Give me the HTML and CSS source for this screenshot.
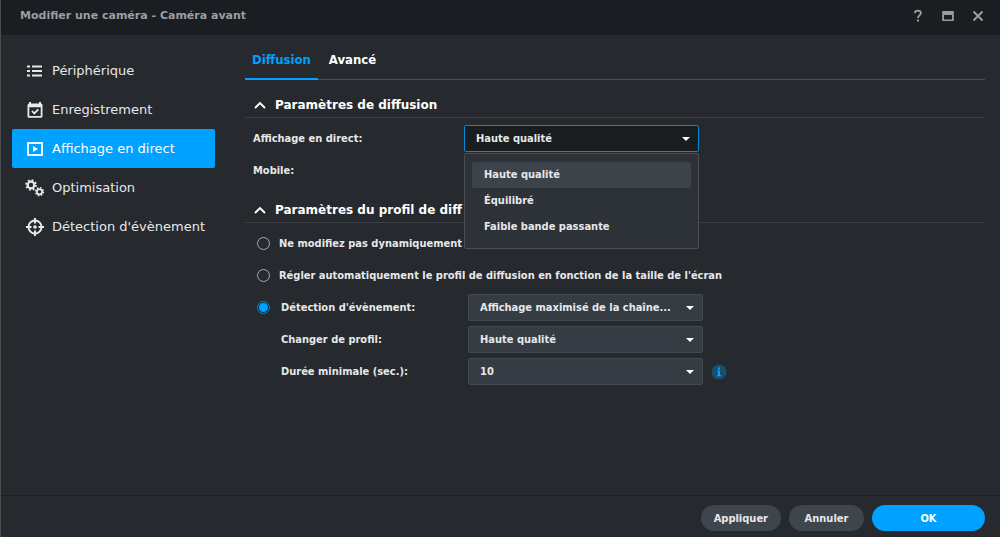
FILE: index.html
```html
<!DOCTYPE html>
<html lang="fr">
<head>
<meta charset="utf-8">
<meta name="viewport" content="width=device-width, initial-scale=1">
<title>Modifier une caméra - Caméra avant</title>
<link rel="stylesheet" href="styles.css">
</head>
<body>
<div class="window">
  <header class="titlebar">
    <h1 class="title">Modifier une caméra - Caméra avant</h1>
    <div class="window-tools">
      <button class="tool" type="button" aria-label="Aide"><svg width="12" height="14" viewBox="0 0 12 14"><path d="M2.8 4.2C2.8 2.5 4.1 1.6 5.8 1.6c1.8 0 3.1 1 3.1 2.5C8.900 6.200 6 6.300 6 9" fill="none" stroke="currentColor" stroke-width="1.8"/><path d="M5 10.600h2v2H5z" fill="currentColor"/></svg></button>
      <button class="tool" type="button" aria-label="Agrandir"><svg width="12" height="14" viewBox="0 0 12 14"><path d="M1 2h10a.8.8 0 0 1 .8.800v8.400a.8.8 0 0 1-.8.800H1a.8.8 0 0 1-.8-.8V2.800A.8.8 0 0 1 1 2zm1 4v4.500h8V6z" fill="currentColor" fill-rule="evenodd"/></svg></button>
      <button class="tool" type="button" aria-label="Fermer"><svg width="12" height="14" viewBox="0 0 12 14"><path d="M1.500 2.500l9 9m0-9l-9 9" stroke="currentColor" stroke-width="2" fill="none"/></svg></button>
    </div>
  </header>

  <div class="body">
    <nav class="sidebar">
      <a class="nav-item" href="#peripherique"><svg width="20" height="20" viewBox="0 0 20 20" fill="currentColor"><path d="M2 4.500h3v2H2zM7 4.500h10v2H7zM2 9h3v2H2zM7 9h10v2H7zM2 13.500h3v2H2zM7 13.500h10v2H7z"/></svg>Périphérique</a>
      <a class="nav-item" href="#enregistrement"><svg width="20" height="20" viewBox="0 0 20 20"><path d="M4 2h2v1.500h8V2h2v1.500A1.500 1.500 0 0 1 17.500 5v11.200a1.500 1.500 0 0 1-1.500 1.500H4a1.500 1.500 0 0 1-1.500-1.500V5A1.500 1.500 0 0 1 4 3.500zM4.300 7.300V16h11.400V7.300z" fill="currentColor" fill-rule="evenodd"/><path d="M7 11l2.300 2.400L13.300 9.300" fill="none" stroke="currentColor" stroke-width="1.800"/></svg>Enregistrement</a>
      <a class="nav-item active" href="#direct" aria-current="page"><svg width="20" height="20" viewBox="0 0 20 20"><rect x="3" y="4" width="14" height="12" fill="none" stroke="currentColor" stroke-width="1.800"/><path d="M8 7l5 3-5 3z" fill="currentColor"/></svg>Affichage en direct</a>
      <a class="nav-item" href="#optimisation"><svg width="20" height="20" viewBox="0 0 20 20" fill="none" stroke="currentColor"><circle cx="6" cy="7" r="3.300" stroke-width="2.200"/><circle cx="6" cy="7" r="4.800" stroke-width="2" stroke-dasharray="1.885 1.885"/><circle cx="14.500" cy="13.700" r="2.600" stroke-width="1.800"/><circle cx="14.500" cy="13.700" r="3.900" stroke-width="1.600" stroke-dasharray="1.532 1.532"/></svg>Optimisation</a>
      <a class="nav-item" href="#detection"><svg width="20" height="20" viewBox="0 0 20 20" fill="none" stroke="currentColor"><circle cx="10" cy="10" r="6.500" stroke-width="2"/><path d="M10 1v5.500M10 13.500V19M1 10h5.500M13.500 10H19" stroke-width="2"/><circle cx="10" cy="10" r="1.800" fill="currentColor" stroke="none"/></svg>Détection d'évènement</a>
    </nav>

    <main class="content">
      <div class="tabs" role="tablist">
        <button class="tab active" type="button" role="tab" aria-selected="true">Diffusion</button>
        <button class="tab" type="button" role="tab" aria-selected="false">Avancé</button>
      </div>

      <section class="section">
        <h2 class="section-title"><svg width="12" height="8" viewBox="0 0 12 8"><path d="M1 7l5-5 5 5" fill="none" stroke="currentColor" stroke-width="1.800"/></svg>Paramètres de diffusion</h2>
        <div class="row">
          <label for="live">Affichage en direct:</label>
          <div class="select open">
            <select id="live"><option>Haute qualité</option><option>Équilibré</option><option>Faible bande passante</option></select>
            <svg class="caret" width="8" height="4" viewBox="0 0 8 4"><path d="M0 0h8L4 4z" fill="currentColor"/></svg>
            <ul class="menu" role="listbox" aria-label="Affichage en direct">
              <li class="option selected" role="option" aria-selected="true">Haute qualité</li>
              <li class="option" role="option" aria-selected="false">Équilibré</li>
              <li class="option" role="option" aria-selected="false">Faible bande passante</li>
            </ul>
          </div>
        </div>
        <div class="row">
          <label for="mobile">Mobile:</label>
          <div class="select">
            <select id="mobile"></select>
          </div>
        </div>
      </section>

      <section class="section">
        <h2 class="section-title"><svg width="12" height="8" viewBox="0 0 12 8"><path d="M1 7l5-5 5 5" fill="none" stroke="currentColor" stroke-width="1.800"/></svg>Paramètres du profil de diff</h2>
        <div class="row choice">
          <input type="radio" name="profile" id="static"><label for="static">Ne modifiez pas dynamiquement</label>
        </div>
        <div class="row choice">
          <input type="radio" name="profile" id="auto"><label for="auto">Régler automatiquement le profil de diffusion en fonction de la taille de l'écran</label>
        </div>
        <div class="row choice nested">
          <input type="radio" name="profile" id="event" checked><label for="event">Détection d'évènement:</label>
          <div class="select">
            <select aria-label="Détection d'évènement"><option>Affichage maximisé de la chaîne...</option></select>
            <svg class="caret" width="8" height="4" viewBox="0 0 8 4"><path d="M0 0h8L4 4z" fill="currentColor"/></svg>
          </div>
        </div>
        <div class="row nested sub">
          <label for="switch">Changer de profil:</label>
          <div class="select">
            <select id="switch"><option>Haute qualité</option></select>
            <svg class="caret" width="8" height="4" viewBox="0 0 8 4"><path d="M0 0h8L4 4z" fill="currentColor"/></svg>
          </div>
        </div>
        <div class="row nested sub">
          <label for="duration">Durée minimale (sec.):</label>
          <div class="select">
            <select id="duration"><option>10</option></select>
            <svg class="caret" width="8" height="4" viewBox="0 0 8 4"><path d="M0 0h8L4 4z" fill="currentColor"/></svg>
          </div>
          <svg class="info" width="16" height="16" viewBox="0 0 16 16" role="img" aria-label="Information"><circle cx="8" cy="8" r="7.500" fill="#17506f"/><path d="M7 3.500h2v2H7zM6 6.500h3v4.500h1v1.300H6V11h1V7.700H6z" fill="#0aa0f5"/></svg>
        </div>
      </section>
    </main>
  </div>

  <footer class="footer">
    <button class="button" type="button">Appliquer</button>
    <button class="button" type="button">Annuler</button>
    <button class="button primary" type="button">OK</button>
  </footer>
</div>
</body>
</html>
```
FILE: styles.css
```css
* {
  box-sizing: border-box;
}

body {
  margin: 0;
  background: #26292e;
  color: #e6e8ea;
  font: bold 11px/16px "DejaVu Sans Condensed", "DejaVu Sans", sans-serif;
}

button,
select {
  font: inherit;
  color: inherit;
}

.window {
  display: flex;
  flex-direction: column;
  min-height: 100vh;
  border-left: 1px solid #4a4b4d;
}

.titlebar {
  display: flex;
  align-items: center;
  justify-content: space-between;
  height: 35px;
  padding: 0 16px 3px 19px;
  background: #1a1d21;
  color: #9b9ea1;
}

.title {
  margin: 0;
  font: bold 11px/16px "DejaVu Sans", sans-serif;
}

.window-tools {
  display: flex;
  gap: 18px;
}

.tool {
  display: flex;
  padding: 0;
  border: 0;
  background: none;
}

.body {
  display: flex;
  flex: 1;
}

.sidebar {
  display: flex;
  flex: 0 0 225px;
  flex-direction: column;
  padding: 16px 11px 0;
}

.nav-item {
  display: flex;
  align-items: center;
  gap: 7px;
  height: 39px;
  padding-left: 13px;
  border-radius: 2px;
  color: #e6e8ea;
  font: 13px/18px "DejaVu Sans", sans-serif;
  text-decoration: none;
  white-space: nowrap;
}

.nav-item.active {
  background: #00a1ff;
  color: #fff;
}

.content {
  flex: 1;
  padding: 8px 15px 16px 19px;
}

.tabs {
  display: flex;
  border-bottom: 1px solid #4c4f54;
}

.tab {
  height: 37px;
  margin-bottom: -1px;
  padding: 0 7px 2px;
  border: 0;
  border-bottom: 2px solid transparent;
  background: none;
  color: #fff;
  font-size: 13px;
}

.tab.active {
  border-color: #00a1ff;
  color: #00a1ff;
}

.tab + .tab {
  margin-left: 4px;
}

.section {
  margin-top: 13px;
}

.section + .section {
  margin-top: 14px;
}

.section-title {
  display: flex;
  align-items: center;
  gap: 9px;
  height: 25px;
  margin: 0 0 7px;
  padding-left: 9px;
  border-bottom: 1px solid #3c4044;
  color: #fff;
  font: bold 12px/24px "DejaVu Sans", sans-serif;
}

.row {
  display: flex;
  align-items: center;
  min-height: 27px;
  margin-bottom: 5px;
  padding-left: 8px;
}

.row > label {
  flex: 0 0 211px;
}

.select {
  position: relative;
  flex: 0 0 235px;
}

.select select {
  display: block;
  width: 100%;
  height: 27px;
  padding: 0 24px 0 11px;
  border: 1px solid #42494f;
  border-radius: 2px;
  appearance: none;
  background: #363c43;
  outline: none;
}

.select.open select {
  border-color: #0088dd;
  background: #1a1d1f;
}

.caret {
  position: absolute;
  top: 12px;
  right: 9px;
  color: #fff;
  pointer-events: none;
}

.menu {
  position: absolute;
  z-index: 1;
  top: 100%;
  left: 0;
  width: 100%;
  margin: 1px 0 0;
  padding: 8px 7px;
  border: 1px solid #4a4e54;
  border-radius: 2px;
  background: #2d3138;
  list-style: none;
}

.option {
  padding: 5px 12px;
  border-radius: 2px;
}

.option.selected {
  background: #3d434a;
}

.choice {
  padding-left: 12px;
}

.choice > label {
  flex: none;
}

.nested > label {
  flex: 0 0 187px;
}

.choice input {
  display: grid;
  place-content: center;
  width: 13px;
  height: 13px;
  margin: 0 9px 0 0;
  border: 1px solid #a7aaad;
  border-radius: 50%;
  appearance: none;
}

.choice.nested input {
  margin-right: 11px;
}

.choice input:checked {
  border-color: #0587d2;
}

.choice input:checked::before {
  width: 9px;
  height: 9px;
  border-radius: 50%;
  background: #00a1ff;
  content: "";
}

.sub {
  padding-left: 36px;
}

.info {
  margin-left: 8px;
}

.footer {
  display: flex;
  justify-content: flex-end;
  gap: 8px;
  padding: 9px 15px 6px;
  border-top: 1px solid #1b1e22;
}

.button {
  min-width: 75px;
  height: 26px;
  padding: 2px 13px 0;
  border: 0;
  border-radius: 13px;
  background: #3e454c;
}

.button.primary {
  min-width: 113px;
  background: #00a1ff;
  color: #fff;
}
```
